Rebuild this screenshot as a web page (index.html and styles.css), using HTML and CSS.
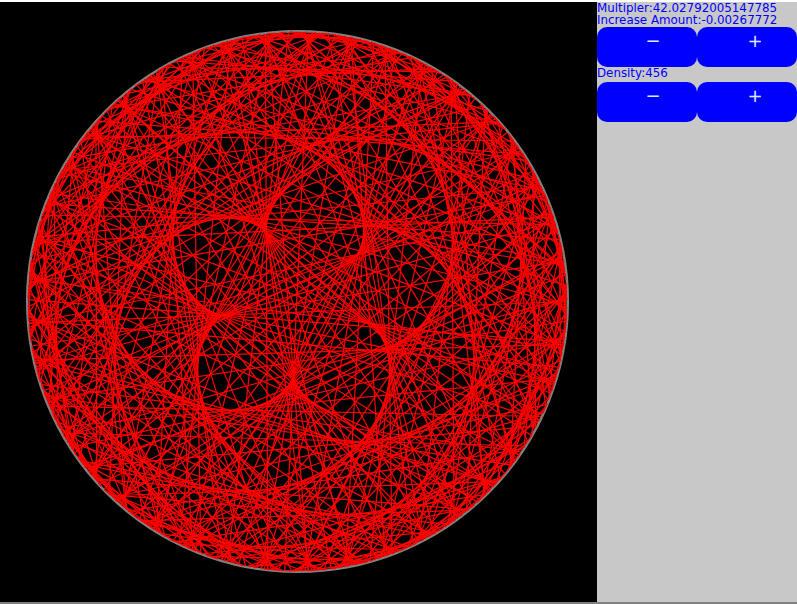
FILE: index.html
```html
<!DOCTYPE html>
<html>
<head>
<meta charset="utf-8">
<title>Times Table Circle</title>
<link rel="stylesheet" href="styles.css">
</head>
<body>
<main class="app">
  <canvas id="stage" class="stage" width="597" height="600"></canvas>
  <aside class="panel">
    <div class="readout">Multipler:42.02792005147785</div>
    <div class="readout">Increase Amount:-0.00267772</div>
    <div class="controls">
      <button class="btn" type="button">−</button>
      <button class="btn btn-plus" type="button">+</button>
    </div>
    <div class="readout density">Density:456</div>
    <div class="controls">
      <button class="btn" type="button">−</button>
      <button class="btn btn-plus" type="button">+</button>
    </div>
  </aside>
</main>
<script src="main.js"></script>
</body>
</html>
```
FILE: styles.css
```css
html, body {
  margin: 0;
  padding: 0;
  height: 100%;
  overflow: hidden;
  background: #fff;
}
.app {
  display: flex;
  width: 797px;
  height: 600px;
  margin-top: 2px;
  border-bottom: 2px solid #808080;
}
.stage {
  display: block;
  width: 597px;
  height: 600px;
  background: #000;
}
.panel {
  width: 200px;
  height: 600px;
  background: #c8c8c8;
  font-family: "DejaVu Sans", sans-serif;
  font-size: 11.85px;
  color: #0000ff;
}
.readout {
  height: 12px;
  line-height: 12px;
  white-space: nowrap;
}
.controls {
  display: flex;
  height: 40px;
  margin-top: 1px;
}
.density {
  margin-top: 0;
  height: 14px;
  line-height: 13px;
}
.btn {
  box-sizing: border-box;
  flex: 0 0 100px;
  width: 100px;
  height: 40px;
  margin: 0;
  padding: 0 0 12px 12px;
  border: 0;
  border-radius: 10px;
  background: #0000ff;
  color: #dfe6ff;
  font-family: "DejaVu Sans", sans-serif;
  font-size: 18px;
  line-height: 28px;
}
.btn-plus {
  padding-left: 16px;
}
```
FILE: main.js
```js
var c = document.getElementById('stage').getContext('2d');
var n = 456, m = 42.02792005147785 - 0.00267772, cx = 297.5, cy = 299.5, r = 269.5;
function pt(i) {
  var a = Math.PI - i * 2 * Math.PI / n;
  return [cx + r * Math.cos(a), cy + r * Math.sin(a)];
}
c.strokeStyle = '#808080';
c.lineWidth = 2.5;
c.beginPath();
c.arc(cx, cy, 270.3, 0, 2 * Math.PI);
c.stroke();
c.strokeStyle = '#ff0000';
c.lineWidth = 1.2;
for (var i = 0; i < n; i++) {
  var p = pt(i), q = pt((i * m) % n);
  c.beginPath();
  c.moveTo(p[0], p[1]);
  c.lineTo(q[0], q[1]);
  c.stroke();
}
```
